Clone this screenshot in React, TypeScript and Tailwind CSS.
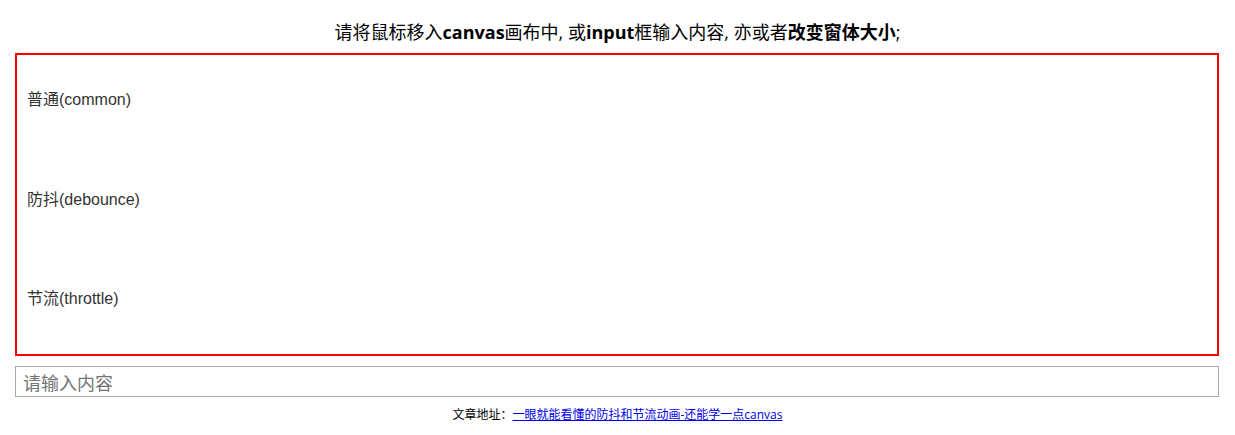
import React from 'react'

const CJK = "font-['Open_Sans','Noto_Sans_CJK_SC',sans-serif]"

const rows = ['普通(common)', '防抖(debounce)', '节流(throttle)']

export default function App() {
  return (
    <div className={`w-[1235px] h-[435px] bg-white text-center ${CJK}`}>
      <h1 className="pt-[20px] h-[53px] text-[18px] leading-[24px] text-black font-normal">
        请将鼠标移入<b className="font-bold">canvas</b>画布中, 或<b className="font-bold">input</b>框输入内容, 亦或者<b className="font-bold">改变窗体大小</b>;
      </h1>

      <div className="ml-[15px] w-[1204px] h-[303px] border-2 border-[#ff0000] flex flex-col text-left font-['Liberation_Sans','Noto_Sans_CJK_SC',sans-serif] text-[16px] leading-[20px] text-[#333]">
        {rows.map(r => (
          <div key={r} className="h-[100px] pt-[35px] pl-[10px]">{r}</div>
        ))}
      </div>

      <div className="ml-[15px] mt-[10px] w-[1204px]">
        <input
          type="text"
          placeholder="请输入内容"
          className="w-full h-[31px] border border-[#a9a9a9] px-[7px] text-[18px] outline-none placeholder:text-[#757575] font-['Noto_Sans_CJK_SC',sans-serif]"
        />
      </div>

      <p className="mt-[10px] text-[12px] leading-[16px] text-black">
        文章地址：<a href="#" className="text-[#0000ee] underline">一眼就能看懂的防抖和节流动画-还能学一点canvas</a>
      </p>
    </div>
  )
}
